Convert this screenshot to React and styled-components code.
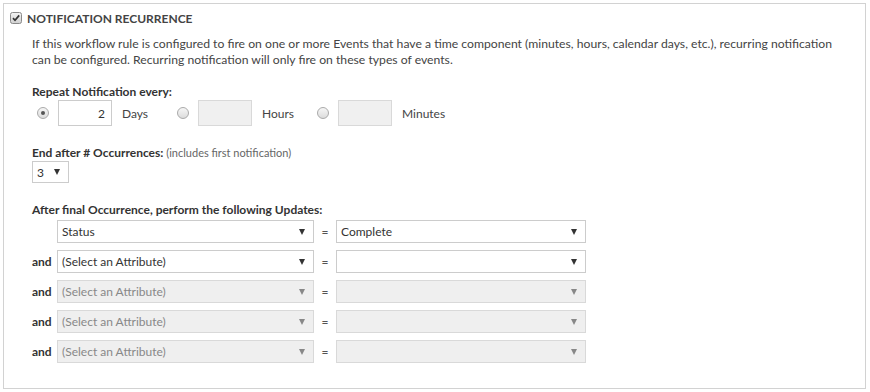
import React from "react";
import styled, { createGlobalStyle } from "styled-components";

const GlobalStyle = createGlobalStyle`
  html, body {
    margin: 0;
    padding: 0;
    background: #fff;
  }
  body {
    font-family: Lato, "Liberation Sans", sans-serif;
    font-size: 12px;
    color: #333;
  }
`;

const Panel = styled.div`
  margin: 3px 0 0 3px;
  width: 861px;
  height: 384px;
  border: 1px solid #d2d2d2;
  box-sizing: content-box;
`;

const Header = styled.div`
  display: flex;
  align-items: center;
  gap: 5px;
  padding: 8px 0 0 6px;
  height: 12px;
`;

const Title = styled.span`
  font-weight: bold;
  font-size: 12px;
  color: #444;
  text-transform: uppercase;
`;

const Body = styled.div`
  padding-left: 28px;
`;

const Desc = styled.p`
  margin: 12px 0 0;
  line-height: 16px;
  width: 805px;
  font-size: 12.2px;
  color: #444;
`;

const Label = styled.div`
  margin-top: ${(p) => p.$top}px;
  font-weight: bold;
  line-height: 16px;
  color: #333;
`;

const Note = styled.span`
  font-weight: normal;
  font-size: 11px;
  color: #666;
`;

const RadioRow = styled.div`
  display: flex;
  align-items: center;
  padding-left: 5px;
`;

const Group = styled.div`
  display: flex;
  align-items: center;
  width: 140px;
`;

const Radio = styled.span`
  width: 10px;
  height: 10px;
  border: 1px solid #aaa;
  border-radius: 50%;
  background: linear-gradient(#f6f6f6, #dcdcdc);
  display: flex;
  align-items: center;
  justify-content: center;
  margin-right: 9px;
  &::after {
    content: "";
    width: 4px;
    height: 4px;
    border-radius: 50%;
    background: ${(p) => (p.$checked ? "#555" : "transparent")};
  }
`;

const NumBox = styled.div`
  width: 46px;
  height: 24px;
  border: 1px solid ${(p) => (p.$disabled ? "#d9d9d9" : "#ccc")};
  background: ${(p) => (p.$disabled ? "#f0f0f0" : "#fff")};
  display: flex;
  align-items: center;
  justify-content: flex-end;
  padding-right: 6px;
  box-sizing: content-box;
  margin-right: 10px;
  color: #333;
  font-size: 12px;
`;

const Unit = styled.span`
  color: #444;
`;

const Select = styled.div`
  box-sizing: border-box;
  width: ${(p) => p.$w}px;
  height: ${(p) => p.$h || 23}px;
  border: 1px solid ${(p) => (p.$disabled ? "#d9d9d9" : "#ccc")};
  background: ${(p) => (p.$disabled ? "#efefef" : "#fff")};
  color: ${(p) => (p.$disabled ? "#888" : "#333")};
  display: flex;
  align-items: center;
  padding: 0 8px 0 4px;
`;

const SelectText = styled.span`
  flex: 1;
  white-space: nowrap;
`;

const Arrow = styled.span`
  width: 0;
  height: 0;
  border-left: 3.5px solid transparent;
  border-right: 3.5px solid transparent;
  border-top: 6px solid ${(p) => (p.$disabled ? "#888" : "#333")};
`;

const Updates = styled.div`
  display: flex;
  flex-direction: column;
  gap: 7px;
  margin-top: 2px;
`;

const UpdateRow = styled.div`
  display: flex;
  align-items: center;
`;

const And = styled.span`
  width: 25px;
  font-weight: bold;
  color: #333;
`;

const Eq = styled.span`
  width: 22px;
  text-align: center;
  color: #555;
`;

function CheckBox() {
  return (
    <svg width="12" height="12" viewBox="0 0 12 12">
      <defs>
        <linearGradient id="cb" x1="0" y1="0" x2="0" y2="1">
          <stop offset="0" stopColor="#f4f4f4" />
          <stop offset="1" stopColor="#d0d0d0" />
        </linearGradient>
      </defs>
      <rect x="0.5" y="0.5" width="11" height="11" rx="2" fill="url(#cb)" stroke="#8a8a8a" />
      <path d="M3 6.2 L5 8.3 L9.2 3.4" fill="none" stroke="#333" strokeWidth="1.7" />
    </svg>
  );
}

function Dropdown({ w, h, disabled, children }) {
  return (
    <Select $w={w} $h={h} $disabled={disabled}>
      <SelectText>{children}</SelectText>
      <Arrow $disabled={disabled} />
    </Select>
  );
}

const updates = [
  { left: "Status", right: "Complete", first: true },
  { left: "(Select an Attribute)", right: "" },
  { left: "(Select an Attribute)", right: "", disabled: true },
  { left: "(Select an Attribute)", right: "", disabled: true },
  { left: "(Select an Attribute)", right: "", disabled: true },
];

export default function App() {
  return (
    <>
      <GlobalStyle />
      <Panel>
        <Header>
          <CheckBox />
          <Title>Notification Recurrence</Title>
        </Header>
        <Body>
          <Desc>
            If this workflow rule is configured to fire on one or more Events that have a time
            component (minutes, hours, calendar days, etc.), recurring notification can be
            configured. Recurring notification will only fire on these types of events.
          </Desc>

          <Label $top={16}>Repeat Notification every:</Label>
          <RadioRow>
            <Group>
              <Radio $checked />
              <NumBox>2</NumBox>
              <Unit>Days</Unit>
            </Group>
            <Group>
              <Radio />
              <NumBox $disabled />
              <Unit>Hours</Unit>
            </Group>
            <Group>
              <Radio />
              <NumBox $disabled />
              <Unit>Minutes</Unit>
            </Group>
          </RadioRow>

          <Label $top={19}>
            End after # Occurrences: <Note>(includes first notification)</Note>
          </Label>
          <Dropdown w={37} h={22}>3</Dropdown>

          <Label $top={19}>After final Occurrence, perform the following Updates:</Label>
          <Updates>
            {updates.map((u, i) => (
              <UpdateRow key={i}>
                <And>{u.first ? "" : "and"}</And>
                <Dropdown w={257} disabled={u.disabled}>{u.left}</Dropdown>
                <Eq>=</Eq>
                <Dropdown w={250} disabled={u.disabled}>{u.right}</Dropdown>
              </UpdateRow>
            ))}
          </Updates>
        </Body>
      </Panel>
    </>
  );
}
